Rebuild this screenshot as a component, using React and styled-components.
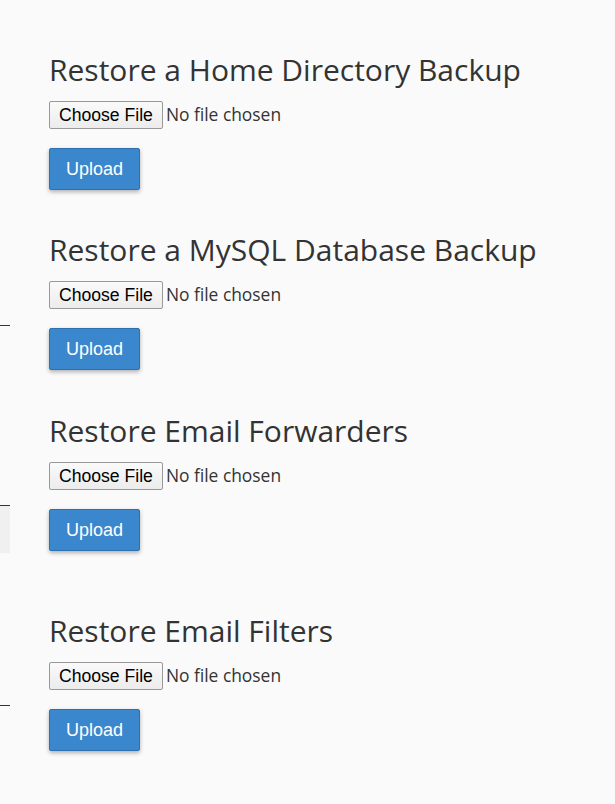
import React from "react";
import styled, { createGlobalStyle } from "styled-components";

const GlobalStyle = createGlobalStyle`
  html, body {
    margin: 0;
    padding: 0;
    background: #fafafa;
  }
  body {
    font-family: "Open Sans", "Liberation Sans", sans-serif;
    color: #333;
  }
`

const Page = styled.div`
  display: flex;
  min-height: 804px;
`
const Sidebar = styled.div`
  width: 10px;
  flex-shrink: 0;
  display: flex;
  flex-direction: column;
`
const SideRule = styled.div`
  margin-top: ${props => props.mt}px;
  height: 1px;
  background: #333;
`
const SideBlock = styled.div`
  height: ${props => props.h}px;
  background: #f0f0f0;
`
const Main = styled.div`
  padding: 53px 0 0 39px;
  display: flex;
  flex-direction: column;
`
const Section = styled.section`
  display: flex;
  flex-direction: column;
  align-items: flex-start;
  margin-bottom: ${props => props.mb}px;
`
const Title = styled.h2`
  margin: 0 0 14px;
  font-family: "Open Sans", sans-serif;
  font-weight: 400;
  font-size: 30px;
  line-height: 34px;
  color: #333;
`
const FileInput = styled.input`
  font-family: "Open Sans", sans-serif;
  font-size: 17.4px;
  color: #333;
  height: 28px;
  margin: 0 0 19px;
  &::file-selector-button {
    font-family: "Liberation Sans", Arial, sans-serif;
    font-size: 17.6px;
    color: #000;
    height: 28px;
    padding: 0 9px;
    margin-right: 3px;
    background: linear-gradient(#fafafa, #ececec);
    border: 1px solid #999;
    border-radius: 2px;
  }
`
const UploadButton = styled.button`
  width: 91px;
  height: 42px;
  font-family: "Liberation Sans", Arial, sans-serif;
  font-size: 18px;
  color: #fff;
  background: #3a87cd;
  border: 1px solid #2f71ad;
  border-radius: 2px;
  box-shadow: 0 2px 4px rgba(0, 0, 0, 0.3);
  cursor: pointer;
`

const sections = [
  {title: 'Restore a Home Directory Backup', mb: 43},
  {title: 'Restore a MySQL Database Backup', mb: 44},
  {title: 'Restore Email Forwarders', mb: 63},
  {title: 'Restore Email Filters', mb: 0},
]

const App = () => {
  return (
    <>
      <GlobalStyle/>
      <Page>
        <Sidebar>
          <SideRule mt={325}/>
          <SideRule mt={179}/>
          <SideBlock h={47}/>
          <SideRule mt={152}/>
        </Sidebar>
        <Main>
          {sections.map(s => (
            <Section key={s.title} mb={s.mb}>
              <Title>{s.title}</Title>
              <FileInput type="file"/>
              <UploadButton>Upload</UploadButton>
            </Section>
          ))}
        </Main>
      </Page>
    </>
  )
}

export default App
